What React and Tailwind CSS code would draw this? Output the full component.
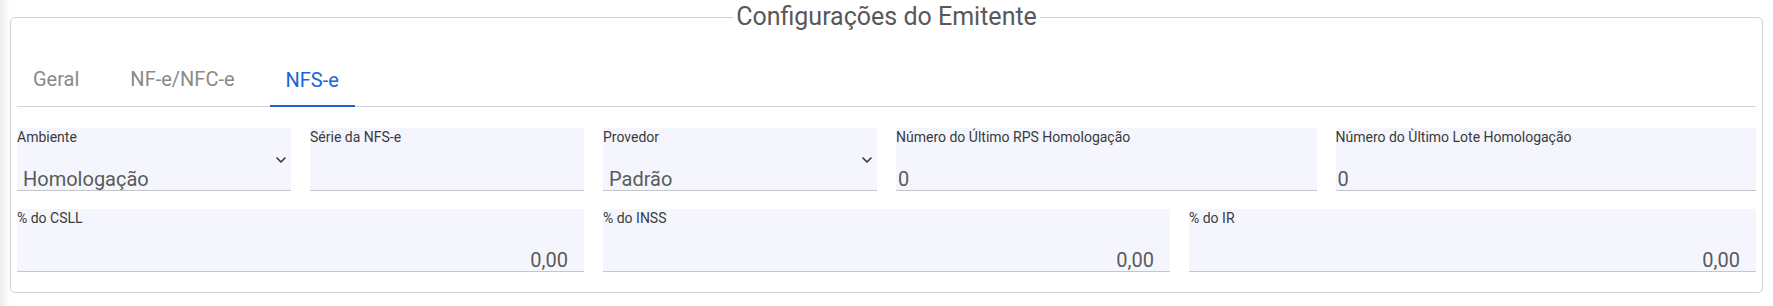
import React from "react";

function Chevron() {
  return (
    <svg width="10" height="7" viewBox="0 0 10 7" className="block">
      <polyline points="1,1 5,5 9,1" fill="none" stroke="#333" strokeWidth="1.6" strokeLinecap="round" strokeLinejoin="round" />
    </svg>
  );
}

function SelectField({ label, value, span }) {
  return (
    <div className={`${span} h-[63px] flex flex-col bg-[#f5f6fd] border-b border-[#c6c6c6]`}>
      <div className="pt-[1px] text-[14px] leading-[16px] text-[#3a3a3a]">{label}</div>
      <div className="flex justify-end pr-[5px] mt-[12px]">
        <Chevron />
      </div>
      <div className="mt-auto pl-[6px] text-[20px] leading-[22px] text-[#5a5a5a]">{value}</div>
    </div>
  );
}

function InputField({ label, value, span, right }) {
  return (
    <div className={`${span} h-[63px] flex flex-col bg-[#f5f6fd] border-b border-[#c6c6c6]`}>
      <div className="pt-[1px] text-[14px] leading-[16px] text-[#3a3a3a]">{label}</div>
      <div
        className={`mt-auto text-[20px] leading-[22px] text-[#5a5a5a] ${
          right ? "text-right pr-[16px]" : "pl-[2px]"
        }`}
      >
        {value}
      </div>
    </div>
  );
}

export default function App() {
  return (
    <div
      className="w-[1773px] h-[306px] px-[10px] bg-[linear-gradient(90deg,#ebebeb_0px,#f6f6f6_5px,#ffffff_10px)]"
      style={{ fontFamily: "Roboto, 'Noto Sans', sans-serif" }}
    >
      <fieldset className="border border-[#d2d2d2] rounded-[5px] px-[6px] pb-[20px] bg-white">
        <legend className="mx-auto px-[3px] text-[25px] leading-[34px] text-[#585858]">
          Configurações do Emitente
        </legend>
        <div className="mt-[21px] flex items-end gap-[19px] border-b border-[#d4d4d4]">
          <div className="px-[16px] pt-[12px] pb-[15px] text-[20px] leading-[24px] text-[#8a8a8a]">Geral</div>
          <div className="px-[16px] pt-[12px] pb-[15px] text-[20px] leading-[24px] text-[#8a8a8a]">NF-e/NFC-e</div>
          <div className="px-[16px] pt-[12px] pb-[13px] text-[20px] leading-[24px] text-[#1a64d6] border-b-2 border-[#1a64d6] -mb-[1px]">
            NFS-e
          </div>
        </div>
        <div className="mt-[21px] grid grid-cols-12 gap-x-[19px] gap-y-[18px]">
          <SelectField span="col-span-2" label="Ambiente" value="Homologação" />
          <InputField span="col-span-2" label="Série da NFS-e" value="" />
          <SelectField span="col-span-2" label="Provedor" value="Padrão" />
          <InputField span="col-span-3" label="Número do Último RPS Homologação" value="0" />
          <InputField span="col-span-3" label="Número do Ùltimo Lote Homologação" value="0" />
          <InputField span="col-span-4" label="% do CSLL" value="0,00" right />
          <InputField span="col-span-4" label="% do INSS" value="0,00" right />
          <InputField span="col-span-4" label="% do IR" value="0,00" right />
        </div>
      </fieldset>
    </div>
  );
}
